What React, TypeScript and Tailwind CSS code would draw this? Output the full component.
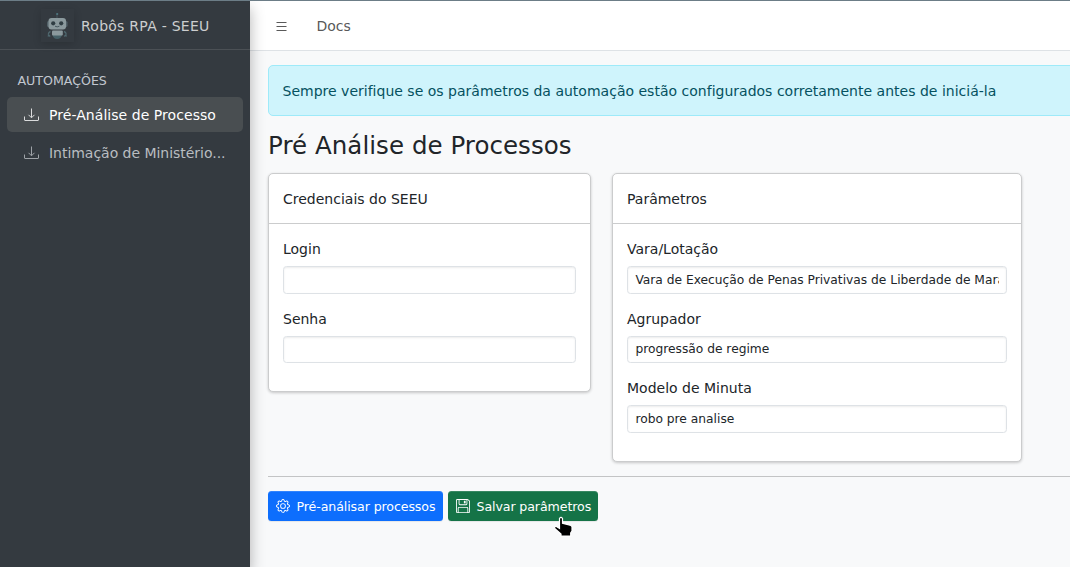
import type { ReactNode } from "react";
import { BsFloppy, BsGear } from "react-icons/bs";

function Robot() {
  return (
    <svg viewBox="0 0 32 32" className="h-8 w-8" aria-hidden="true">
      <path d="M16 5v5" stroke="#45545c" strokeWidth="1" />
      <circle cx="16.200" cy="5" r="1.100" fill="#4f7780" />
      <rect x="6" y="12" width="20.500" height="6" rx="1.500" fill="#526168" />
      <rect x="7.500" y="9" width="17.500" height="11.500" rx="3" fill="#8b999d" />
      <circle cx="12.200" cy="14.300" r="2.100" fill="#303d43" />
      <circle cx="20.200" cy="14.300" r="2.100" fill="#303d43" />
      <path d="M14 17.200q2.200 1.300 4.400 0" stroke="#46565d" fill="none" />
      <path
        d="M9.500 22.500q-2 .5-2.300 3M7 27.500l.8-1.500 1.400 1.500M23 22.500q2 .5 2.300 3M25.500 27.500l-.8-1.500-1.400 1.500"
        stroke="#506970"
        strokeWidth="1.300"
        fill="none"
      />
      <path d="M11.500 26h9.500q-1 4-4.800 4t-4.700-4" fill="#456067" />
      <rect x="11" y="21.500" width="10.800" height="5" rx="1" fill="#8b999d" />
    </svg>
  );
}

function TrayIcon() {
  return (
    <svg
      viewBox="0 0 15 14"
      className="mr-[10px] h-[14px] w-[15px] shrink-0 opacity-80"
      fill="none"
      stroke="currentColor"
      aria-hidden="true"
    >
      <path d="M.5 8.500V12q0 .5.500.5h13q.5 0 .5-.500V8.500M7.500.500v9M4.500 6.800l3 3 3-3" />
    </svg>
  );
}

function MenuIcon() {
  return (
    <svg viewBox="0 0 14 14" className="h-[14px] w-[14px]" stroke="currentColor" aria-hidden="true">
      <path d="M2.500 3.500h10M2.500 7.500h10M2.500 11.500h10" />
    </svg>
  );
}

function NavItem({ label, active = false }: { label: string; active?: boolean }) {
  return (
    <a
      className={`flex h-[35px] items-center rounded-[5px] pl-[17px] ${
        active ? "bg-[#494e51] tracking-[0.05px] text-white" : "tracking-[-0.03px] text-[#b9bdc1]"
      }`}
    >
      <TrayIcon />
      <span className="pt-[2px] whitespace-nowrap">{label}</span>
    </a>
  );
}

function Field({ label, value = "", type = "text" }: { label: string; value?: string; type?: string }) {
  return (
    <label className="mb-[14px] block">
      <span className="mb-[6px] block pt-px">{label}</span>
      <input
        type={type}
        defaultValue={value}
        className="block h-[27.4px] w-full rounded-[3.5px] border border-[#dee2e6] bg-white px-[7.4px] text-[12.25px] leading-[18.4px] shadow-[inset_0_1px_2px_rgba(0,0,0,0.075)] outline-none"
      />
    </label>
  );
}

function Card({ title, width, children }: { title: string; width: string; children: ReactNode }) {
  return (
    <section
      className={`rounded-[5px] border border-[#cbcccd] bg-white shadow-[0_1px_3px_rgba(0,0,0,0.2)] ${width}`}
    >
      <h2 className="border-b border-[#cbcccd] px-[14px] pt-[15px] pb-[13px]">{title}</h2>
      <div className="p-[14px]">{children}</div>
    </section>
  );
}

export default function App() {
  return (
    <div className="flex h-[567px] w-full overflow-hidden border-t border-[#6c7d87] bg-[#f8f9fa] font-['DejaVu_Sans',sans-serif] text-[14px] leading-[21px] text-[#212529]">
      <aside className="z-10 w-[250px] shrink-0 bg-[#343a40] shadow-[0_7px_14px_rgba(0,0,0,0.3)]">
        <div className="flex h-[49px] items-center border-b border-[#4b5055] pl-[41px] text-[#cccecf]">
          <div className="mr-[7px] h-[33px] w-[33px] shadow-[0_2px_8px_rgba(0,0,0,0.16)]">
            <Robot />
          </div>
          <span className="pt-[2px] tracking-[0.25px]">Robôs RPA - SEEU</span>
        </div>
        <nav className="px-[7px] pt-[20px]">
          <div className="mb-[6px] pl-[10.500px] text-[12.600px] text-[#c2c7d0]">AUTOMAÇÕES</div>
          <div className="flex flex-col gap-[3px]">
            <NavItem label="Pré-Análise de Processo" active />
            <NavItem label="Intimação de Ministério..." />
          </div>
        </nav>
      </aside>

      <div className="min-w-0 flex-1">
        <header className="flex h-[50px] items-center border-b border-[#dee2e6] bg-white pl-[24px] text-[#595959]">
          <MenuIcon />
          <span className="ml-[28.500px] pt-[2px]">Docs</span>
        </header>
        <main className="pt-[14px] pl-[18px]">
          <div className="mr-[-20px] rounded-[5px] border border-[#9eeaf9] bg-[#cff4fc] px-[13.500px] pt-[15px] pb-[13px] tracking-[0.008px] text-[#055160]">
            Sempre verifique se os parâmetros da automação estão configurados corretamente antes de iniciá-la
          </div>
          <h1 className="mt-[15px] mb-[13px] text-[24.500px] leading-[29.400px] tracking-[0.050px]">
            Pré Análise de Processos
          </h1>
          <div className="flex items-start gap-[21px]">
            <Card title="Credenciais do SEEU" width="w-[323px]">
              <Field label="Login" />
              <Field label="Senha" type="password" />
            </Card>
            <Card title="Parâmetros" width="w-[410px]">
              <Field label="Vara/Lotação" value="Vara de Execução de Penas Privativas de Liberdade de Marabá" />
              <Field label="Agrupador" value="progressão de regime" />
              <Field label="Modelo de Minuta" value="robo pre analise" />
            </Card>
          </div>
          <hr className="my-[14px] border-t border-[#c3c4c5]" />
          <div className="flex gap-[5px] text-[12.600px] tracking-[-0.100px] text-white">
            <button className="flex h-[30px] w-[175px] items-center rounded-[3.500px] bg-[#0d6efd] pl-[8px] shadow-[inset_0_1px_0_rgba(255,255,255,0.15),0_1px_1px_rgba(0,0,0,0.075)]">
              <BsGear className="mr-[6.500px] h-[14px] w-[14px] shrink-0" />
              <span className="pt-[2px] whitespace-nowrap">Pré-análisar processos</span>
            </button>
            <button className="relative flex h-[30px] w-[150px] items-center rounded-[3.500px] bg-[#157347] pl-[8px] shadow-[inset_0_1px_0_rgba(255,255,255,0.15),0_1px_1px_rgba(0,0,0,0.075)]">
              <BsFloppy className="mr-[6.500px] h-[14px] w-[14px] shrink-0" />
              <span className="pt-[2px] whitespace-nowrap">Salvar parâmetros</span>
              <svg viewBox="0 0 20 22" className="absolute top-[25px] left-[105px] h-[22px] w-5" aria-hidden="true">
                <path
                  d="M6.500 2.500q1.500-2.300 3 0V7.200l8.500 2.300 1 1.200V15l-1.300 2v3H8v-2L2 12.800 1.500 11l1.500-.8 3.500 2.300z"
                  fill="#000"
                  stroke="#fff"
                  strokeWidth="1.200"
                />
              </svg>
            </button>
          </div>
        </main>
      </div>
    </div>
  );
}
